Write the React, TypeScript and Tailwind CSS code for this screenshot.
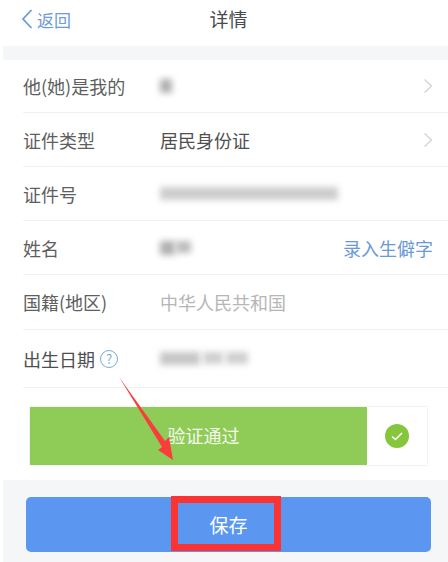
import React from 'react';

const cjk = 'font-["Noto_Sans_CJK_SC","Noto_Sans",sans-serif]';

const Chevron = () => (
  <svg width="10" height="16" viewBox="0 0 10 16" fill="none" className="absolute right-[15px] top-1/2 -translate-y-1/2">
    <path d="M1.5 1.5 L8.5 8 L1.5 14.5" stroke="#d4d4d4" strokeWidth="1.4" />
  </svg>
);

const Blurred = ({ width, height = 14, color = 'bg-[#b4b4b4]' }: { width: number; height?: number; color?: string }) => (
  <div className={`${color} blur-[3px]`} style={{ width, height }} />
);

const Row = ({ label, children, height, line = true }: { label: React.ReactNode; children?: React.ReactNode; height: string; line?: boolean }) => (
  <div className={`relative flex items-center ml-[23px] ${height} ${line ? 'border-b border-[#f1f2f4]' : ''}`}>
    <div className="w-[137px] shrink-0 text-[#5e5e5e] flex items-center">{label}</div>
    {children}
  </div>
);

export default function App() {
  return (
    <div className={`relative w-[448px] h-[562px] overflow-hidden bg-white text-[18px] leading-none ${cjk}`}>
      {/* Nav bar */}
      <div className="relative h-[46px] flex items-center justify-center">
        <div className="absolute left-[21px] top-[9px] flex items-center gap-[4px] text-[#6d9bd8] text-[17px]">
          <svg width="12" height="20" viewBox="0 0 12 20" fill="none">
            <path d="M10.5 1 L2 10 L10.5 19" stroke="#6d9bd8" strokeWidth="1.8" />
          </svg>
          <span>返回</span>
        </div>
        <span className="text-[#4a4a4a] text-[19px] -mt-[10px] ml-[9px]">详情</span>
      </div>
      <div className="ml-[3px] h-[14px] bg-[#f5f6f8]" />

      {/* Form rows */}
      <Row label="他(她)是我的" height="h-[53px]">
        <Blurred width={12} height={14} color="bg-[#b0b0b0]" />
        <Chevron />
      </Row>
      <Row label="证件类型" height="h-[54px]">
        <span className="text-[#4f4f4f]">居民身份证</span>
        <Chevron />
      </Row>
      <Row label="证件号" height="h-[54px]">
        <Blurred width={178} height={13} color="bg-[#cdcdcd]" />
      </Row>
      <Row label="姓名" height="h-[54px]">
        <div className="flex gap-[1px]">
          <Blurred width={15} height={14} color="bg-[#b0b0b0]" />
          <Blurred width={15} height={12} color="bg-[#bcbcbc]" />
        </div>
        <span className="absolute right-[15px] text-[#6b9ad6]">录入生僻字</span>
      </Row>
      <Row label="国籍(地区)" height="h-[55px]">
        <span className="text-[#b6b6b6] text-[18px]">中华人民共和国</span>
      </Row>
      <Row
        height="h-[58px]"
        label={
          <>
            <span className="text-[#4f4f4f]">出生日期</span>
            <span className="ml-[5px] w-[18px] h-[18px] rounded-full border border-[#7ea6dc] text-[#7ea6dc] text-[13px] flex items-center justify-center">?</span>
          </>
        }
      >
        <div className="flex gap-[3px]">
          <Blurred width={40} height={13} color="bg-[#c6c6c6]" />
          <Blurred width={20} height={12} color="bg-[#cfcfcf]" />
          <Blurred width={22} height={12} color="bg-[#cfcfcf]" />
        </div>
      </Row>

      {/* Verification */}
      <div className="h-[92px] pt-[19px] pl-[30px]">
        <div className="w-[397px] h-[58px] flex shadow-[0_0_2px_rgba(0,0,0,0.15)]">
          <div className="w-[337px] bg-[#8fcc57] text-[#f4f9ee] flex items-center justify-center pl-[10px] text-[18px] pb-[2px]">验证通过</div>
          <div className="flex-1 bg-white flex items-center justify-center">
            <svg width="24" height="24" viewBox="0 0 24 24">
              <circle cx="12" cy="12" r="12" fill="#86c63c" />
              <path d="M7 12.5 L10.5 15.5 L17 9" fill="none" stroke="#fff" strokeWidth="1.6" />
            </svg>
          </div>
        </div>
      </div>

      {/* Footer */}
      <div className="ml-[3px] h-[82px] bg-[#f5f6f8] pt-[17px] pl-[23px]">
        <div className="w-[405px] h-[55px] rounded-[5px] bg-[#5b97f1] flex items-center justify-center text-white text-[19px]">保存</div>
      </div>

      {/* Annotations */}
      <div className="absolute left-[171px] top-[496px] w-[110px] h-[55px] border-[7px] border-[#fb3333]" />
      <svg className="absolute left-[115px] top-[372px]" width="70" height="95" viewBox="0 0 70 95">
        <path d="M4 5 L50 69 L54 65 L58 88 L43 78 L47 75 Z" fill="#fb3c3c" />
      </svg>
    </div>
  );
}
